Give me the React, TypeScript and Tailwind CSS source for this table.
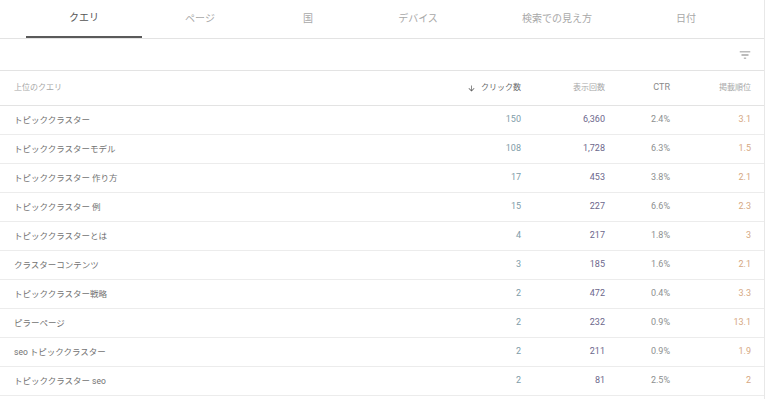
const TABS = [
  { label: "クエリ", w: "w-[116px]", active: true },
  { label: "ページ", w: "w-[116px]" },
  { label: "国", w: "w-[100px]" },
  { label: "デバイス", w: "w-[120px]" },
  { label: "検索での見え方", w: "w-[158px]" },
  { label: "日付", w: "w-[100px]" },
];

const ROWS: [string, string, string, string, string][] = [
  ["トピッククラスター", "150", "6,360", "2.4%", "3.1"],
  ["トピッククラスターモデル", "108", "1,728", "6.3%", "1.5"],
  ["トピッククラスター 作り方", "17", "453", "3.8%", "2.1"],
  ["トピッククラスター 例", "15", "227", "6.6%", "2.3"],
  ["トピッククラスターとは", "4", "217", "1.8%", "3"],
  ["クラスターコンテンツ", "3", "185", "1.6%", "2.1"],
  ["トピッククラスター戦略", "2", "472", "0.4%", "3.3"],
  ["ピラーページ", "2", "232", "0.9%", "13.1"],
  ["seo トピッククラスター", "2", "211", "0.9%", "1.9"],
  ["トピッククラスター seo", "2", "81", "2.5%", "2"],
];

const font = "font-['Roboto','Noto_Sans_CJK_JP',sans-serif]";

export default function App() {
  return (
    <div className={`w-[768px] h-[399px] bg-white overflow-hidden ${font}`}>
      <div className="w-[765px] h-full border-r border-[#e8e8e8]">
        {/* Tabs */}
        <div className="flex h-[39px] pl-[26px] border-b border-[#e3e3e3]">
          {TABS.map((t) => (
            <div
              key={t.label}
              className={`${t.w} h-full flex items-center justify-center text-[10px] pb-[2px] ${
                t.active ? "border-b-2 border-[#5a5a5a] text-[#555]" : "text-[#a8a8a8]"
              }`}
            >
              {t.label}
            </div>
          ))}
        </div>

        {/* Filter row */}
        <div className="h-[32px] flex items-center justify-end pr-[12px] border-b border-[#e3e3e3]">
          <svg width="14" height="14" viewBox="0 0 24 24" fill="#7a7a7a">
            <path d="M10 18h4v-1.4h-4V18zM3 6v1.4h18V6H3zm3 6.7h12v-1.4H6v1.4z" />
          </svg>
        </div>

        {/* Header */}
        <div className="h-[35px] flex items-center border-b border-[#e3e3e3] text-[8px] pr-[13px]">
          <div className="flex-1 pl-[14px] text-[#a8a8a8]">上位のクエリ</div>
          <div className="w-[100px] flex items-center justify-end gap-[5px] text-[#6a6a6a]">
            <svg width="9" height="9" viewBox="0 0 24 24" fill="#666">
              <path d="M20 12l-1.41-1.41L13 16.17V4h-2v12.17l-5.58-5.59L4 12l8 8 8-8z" />
            </svg>
            <span>クリック数</span>
          </div>
          <div className="w-[84px] text-right text-[#a8a8a8]">表示回数</div>
          <div className="w-[65px] text-right text-[#8a8a8a] text-[9px]">CTR</div>
          <div className="w-[81px] text-right text-[#a8a8a8]">掲載順位</div>
        </div>

        {/* Rows */}
        {ROWS.map(([q, clicks, imp, ctr, pos]) => (
          <div key={q} className="h-[29px] flex items-center border-b border-[#ececec] text-[9px] pr-[13px]">
            <div className="flex-1 pl-[14px] text-[#727272] text-[8.5px]">{q}</div>
            <div className="w-[100px] text-right text-[#809ca8]">{clicks}</div>
            <div className="w-[84px] text-right text-[#6c678c]">{imp}</div>
            <div className="w-[65px] text-right text-[#8d9090]">{ctr}</div>
            <div className="w-[81px] text-right text-[#d6a882]">{pos}</div>
          </div>
        ))}
      </div>
    </div>
  );
}
